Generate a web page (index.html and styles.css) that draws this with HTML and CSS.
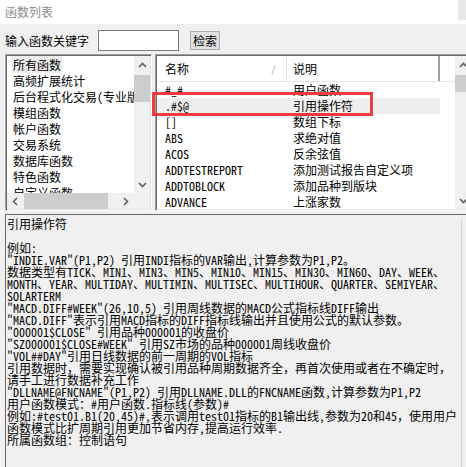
FILE: index.html
```html
<!DOCTYPE html>
<html lang="zh-CN">
<head>
    <meta charset="UTF-8">
    <title>函数列表</title>
    <link rel="stylesheet" href="styles.css">
</head>
<body>
    <div class="titlebar">
        <span class="title">函数列表</span>
        <span class="title-edge"></span>
    </div>

    <div class="toolbar">
        <span class="search-label">输入函数关键字</span>
        <input class="search-input" type="text">
        <button class="search-btn">检索</button>
    </div>

    <div class="panes">
        <!-- function groups -->
        <div class="group-list sunken">
            <div class="group-body">
                <ul class="groups">
                    <li class="selected"><span>所有函数</span></li>
                    <li><span>高频扩展统计</span></li>
                    <li><span>后台程式化交易(专业版)</span></li>
                    <li><span>模组函数</span></li>
                    <li><span>帐户函数</span></li>
                    <li><span>交易系统</span></li>
                    <li><span>数据库函数</span></li>
                    <li><span>特色函数</span></li>
                    <li><span>自定义函数</span></li>
                </ul>
                <div class="vscroll">
                    <div class="arrow"><svg width="9" height="6" viewBox="0 0 9 6"><polyline points="1,5 4.5,1.5 8,5" fill="none" stroke="#606060" stroke-width="1.6"/></svg></div>
                    <div class="thumb group-thumb"></div>
                    <div class="track"></div>
                    <div class="arrow"><svg width="9" height="6" viewBox="0 0 9 6"><polyline points="1,1 4.5,4.5 8,1" fill="none" stroke="#606060" stroke-width="1.6"/></svg></div>
                </div>
            </div>
            <div class="hscroll">
                <div class="arrow"><svg width="6" height="9" viewBox="0 0 6 9"><polyline points="5,1 1.5,4.5 5,8" fill="none" stroke="#606060" stroke-width="1.6"/></svg></div>
                <div class="hthumb"></div>
                <div class="track"></div>
                <div class="arrow"><svg width="6" height="9" viewBox="0 0 6 9"><polyline points="1,1 4.5,4.5 1,8" fill="none" stroke="#606060" stroke-width="1.6"/></svg></div>
                <div class="corner"></div>
            </div>
        </div>

        <!-- function list -->
        <div class="func-list sunken">
            <div class="func-table">
                <div class="func-head">
                    <div class="col-name">名称<span class="sort">/</span></div>
                    <div class="col-desc">说明</div>
                </div>
                <div class="func-row"><span class="col-name">#_#</span><span class="col-desc">用户函数</span></div>
                <div class="func-row selected"><span class="col-name">.#$@</span><span class="col-desc">引用操作符</span></div>
                <div class="func-row"><span class="col-name">[]</span><span class="col-desc">数组下标</span></div>
                <div class="func-row"><span class="col-name">ABS</span><span class="col-desc">求绝对值</span></div>
                <div class="func-row"><span class="col-name">ACOS</span><span class="col-desc">反余弦值</span></div>
                <div class="func-row"><span class="col-name">ADDTESTREPORT</span><span class="col-desc">添加测试报告自定义项</span></div>
                <div class="func-row"><span class="col-name">ADDTOBLOCK</span><span class="col-desc">添加品种到版块</span></div>
                <div class="func-row"><span class="col-name">ADVANCE</span><span class="col-desc">上涨家数</span></div>
            </div>
            <div class="vscroll">
                <div class="arrow"><svg width="9" height="6" viewBox="0 0 9 6"><polyline points="1,5 4.5,1.5 8,5" fill="none" stroke="#606060" stroke-width="1.6"/></svg></div>
                <div class="thumb func-thumb"></div>
                <div class="track"></div>
                <div class="arrow"><svg width="9" height="6" viewBox="0 0 9 6"><polyline points="1,1 4.5,4.5 8,1" fill="none" stroke="#606060" stroke-width="1.6"/></svg></div>
            </div>
        </div>
    </div>

    <div class="detail">
        <div class="detail-text">
            <p>引用操作符</p>
            <p>&nbsp;</p>
            <p>例如:</p>
            <p>"INDIE.VAR"(P1,P2) 引用INDI指标的VAR输出,计算参数为P1,P2。</p>
            <p>数据类型有TICK、MIN1、MIN3、MIN5、MIN10、MIN15、MIN30、MIN60、DAY、WEEK、</p>
            <p>MONTH、YEAR、MULTIDAY、MULTIMIN、MULTISEC、MULTIHOUR、QUARTER、SEMIYEAR、</p>
            <p>SOLARTERM</p>
            <p>"MACD.DIFF#WEEK"(26,10,5) 引用周线数据的MACD公式指标线DIFF输出</p>
            <p>"MACD.DIFF"表示引用MACD指标的DIFF指标线输出并且使用公式的默认参数。</p>
            <p>"000001$CLOSE" 引用品种000001的收盘价</p>
            <p>"SZ000001$CLOSE#WEEK" 引用SZ市场的品种000001周线收盘价</p>
            <p>"VOL##DAY"引用日线数据的前一周期的VOL指标</p>
            <p>引用数据时，需要实现确认被引用品种周期数据齐全，再首次使用或者在不确定时，</p>
            <p>请手工进行数据补充工作</p>
            <p>"DLLNAME@FNCNAME"(P1,P2) 引用DLLNAME.DLL的FNCNAME函数,计算参数为P1,P2</p>
            <p>用户函数模式：#用户函数.指标线(参数)#</p>
            <p>例如:#test01.B1(20,45)#,表示调用test01指标的B1输出线,参数为20和45，使用用户</p>
            <p>函数模式比扩周期引用更加节省内存,提高运行效率.</p>
            <p>所属函数组：控制语句</p>
        </div>
        <div class="detail-edge"></div>
    </div>

    <div class="mark"></div>
</body>
</html>
```

FILE: styles.css
```css
* {
    margin: 0;
    padding: 0;
    box-sizing: border-box;
}

body {
    width: 466px;
    height: 467px;
    overflow: hidden;
    position: relative;
    background: #f0f0f0;
    color: #000;
    font-family: "Noto Sans Mono CJK SC", "Noto Sans CJK SC", monospace;
    font-size: 12px;
}

.titlebar {
    height: 24px;
    background: #fff;
    display: flex;
    justify-content: space-between;
}

.title {
    padding-left: 5px;
    line-height: 24px;
    color: #8e8e8e;
}

.title-edge {
    width: 8px;
    height: 20px;
    background: #e8e8e8;
}

.toolbar {
    height: 30px;
    display: flex;
    align-items: center;
    padding: 3px 0 0 5px;
}

.search-input {
    width: 81px;
    height: 21px;
    margin-left: 9px;
    border: 1px solid #7a7a7a;
    background: #fff;
}

.search-btn {
    width: 30px;
    height: 19px;
    margin-left: 11px;
    border: 1px solid #adadad;
    background: #e1e1e1;
    font-family: inherit;
    font-size: 12px;
    line-height: 17px;
    color: #000;
}

.panes {
    height: 157px;
    display: flex;
    gap: 3px;
    padding-left: 5px;
}

.sunken {
    border-top: 1px solid #a0a0a0;
    border-left: 1px solid #a0a0a0;
    border-right: 1px solid #fff;
    border-bottom: 1px solid #fff;
    box-shadow: inset 1px 1px 0 #696969, inset -1px -1px 0 #e3e3e3;
    padding: 1px;
}

.group-list {
    width: 147px;
    display: flex;
    flex-direction: column;
}

.group-body {
    flex: 1;
    display: flex;
    background: #fff;
    min-height: 0;
}

.groups {
    flex: 1;
    list-style: none;
    overflow: hidden;
    padding-top: 1px;
}

.groups li {
    height: 16px;
    line-height: 16px;
    padding-left: 5px;
    white-space: nowrap;
}

.groups li span {
    padding: 0 1px;
}

.groups li.selected span {
    background: #ececec;
}

.vscroll {
    width: 16px;
    background: #f0f0f0;
    display: flex;
    flex-direction: column;
}

.vscroll .arrow {
    height: 17px;
    display: flex;
    align-items: center;
    justify-content: center;
}

.thumb {
    margin-top: 2px;
    background: #cdcdcd;
}

.group-thumb {
    height: 27px;
}

.func-thumb {
    height: 17px;
}

.track {
    flex: 1;
}

.hscroll {
    height: 16px;
    display: flex;
    background: #f0f0f0;
}

.hscroll .arrow {
    width: 16px;
    display: flex;
    align-items: center;
    justify-content: center;
}

.hthumb {
    width: 84px;
    margin-left: 1px;
    background: #cdcdcd;
}

.corner {
    width: 16px;
}

.func-list {
    flex: 1;
    margin-right: -8px;
    display: flex;
    background: #fff;
}

.func-list .vscroll {
    width: 17px;
}

.func-table {
    flex: 1;
    overflow: hidden;
}

.func-head {
    height: 26px;
    display: flex;
    align-items: center;
    border-bottom: 1px solid #e5e5e5;
}

.func-head .col-name {
    height: 100%;
    display: flex;
    align-items: center;
    justify-content: space-between;
    padding-right: 10px;
    border-right: 1px solid #e5e5e5;
}

.func-head .col-desc {
    height: 100%;
    display: flex;
    align-items: center;
    border-right: 2px solid #a0a0a0;
}

.sort {
    color: #a0a0a0;
    font-size: 10px;
}

.col-name {
    width: 130px;
    padding-left: 8px;
    white-space: nowrap;
}

.col-desc {
    width: 153px;
    padding-left: 6px;
    white-space: nowrap;
}

.func-row {
    width: 283px;
    height: 16px;
    line-height: 16px;
    display: flex;
}

.func-row.selected {
    background: #efefef;
}

.detail {
    height: 253px;
    margin: 3px 0 0 5px;
    display: flex;
    border-top: 1px solid #696969;
    border-left: 1px solid #696969;
}

.detail-text {
    flex: 1;
    padding: 3px 0 0 1px;
    overflow: hidden;
}

.detail-text p {
    height: 12px;
    line-height: 12px;
    white-space: nowrap;
}

.detail-edge {
    width: 5px;
    margin-top: 3px;
    border-left: 1px solid #d4d4d4;
}

.mark {
    position: absolute;
    left: 152px;
    top: 92px;
    width: 221px;
    height: 24px;
    border: 3px solid #f03c3c;
}
```
